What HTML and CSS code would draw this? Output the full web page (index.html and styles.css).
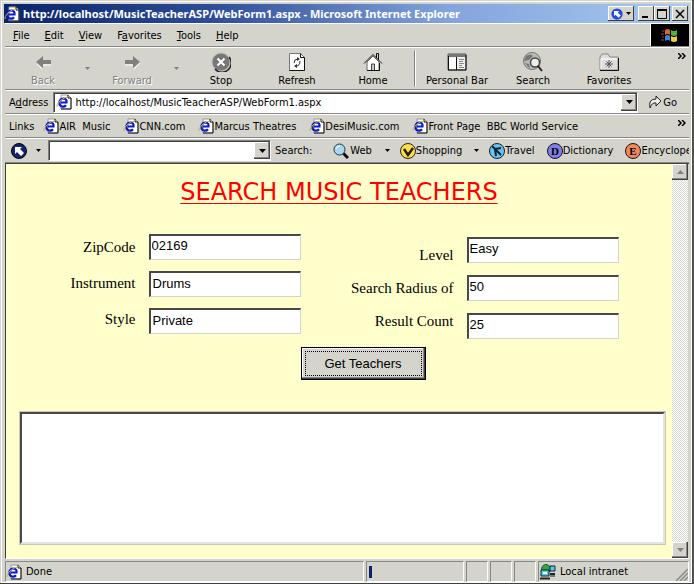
FILE: index.html
```html
<!DOCTYPE html>
<html lang="en">
<head>
    <meta charset="UTF-8">
    <title>WebForm1</title>
    <link rel="stylesheet" href="styles.css">
</head>
<body>
    <!-- shared icons -->
    <svg class="defs" aria-hidden="true">
        <symbol id="ie" viewBox="0 0 16 16">
            <path d="M5 1h7l3 3v11H5z" fill="#fff" stroke="#999"/>
            <path d="M15 4v11H5M12 1v3h3" fill="none" stroke="#111"/>
            <path d="M10 11.200Q8.500 13 6.300 12.600Q3.300 12 3.300 8.500Q4 4.500 7.500 4.500Q11 4.800 10.500 8.500H5" fill="none" stroke="#0a18d0" stroke-width="2.200"/>
            <path d="M1 13Q0 11 4 7T12 3" fill="none" stroke="#c8b820"/>
        </symbol>
        <symbol id="down" viewBox="0 0 7 4">
            <path d="M0 0h7L3.500 4z" fill="currentColor"/>
        </symbol>
        <symbol id="more" viewBox="0 0 8 6">
            <path d="M0 0l3 3-3 3M4 0l3 3-3 3" fill="none" stroke="#000" stroke-width="1.500"/>
        </symbol>
        <symbol id="compass" viewBox="0 0 16 16">
            <circle cx="8" cy="8" r="7.500" fill="#12246e" stroke="#001"/>
            <path d="M4 4h7L9 6l4 4-3 3-4-4-2 2z" fill="#fff"/>
        </symbol>
    </svg>

    <div class="window">
        <header class="titlebar">
            <svg class="icon"><use href="#ie"/></svg>
            <span class="title">http://localhost/MusicTeacherASP/WebForm1.aspx - Microsoft Internet Explorer</span>
            <button class="cap cap_wide" aria-label="Companion">
                <svg width="12" height="12" viewBox="0 0 16 16"><circle cx="8" cy="8" r="7.500" fill="#2448e0"/><path d="M4 4h7L9 6l4 4-3 3-4-4-2 2z" fill="#fff"/></svg>
                <svg width="5" height="3"><use href="#down"/></svg>
            </button>
            <div class="cap_group">
                <button class="cap" aria-label="Minimize"><svg width="10" height="10"><path d="M1 8h6" stroke="#000" stroke-width="2"/></svg></button>
                <button class="cap" aria-label="Maximize"><svg width="10" height="10"><path d="M.5 0v9.500h9V0" fill="none" stroke="#000"/><path d="M0 1h10" stroke="#000" stroke-width="2"/></svg></button>
            </div>
            <button class="cap" aria-label="Close"><svg width="10" height="10"><path d="M1 1l8 8M9 1L1 9" stroke="#000" stroke-width="1.500"/></svg></button>
        </header>

        <nav class="menubar">
            <button><u>F</u>ile</button>
            <button><u>E</u>dit</button>
            <button><u>V</u>iew</button>
            <button>F<u>a</u>vorites</button>
            <button><u>T</u>ools</button>
            <button><u>H</u>elp</button>
            <div class="throbber">
                <svg width="18" height="16" viewBox="0 0 18 16">
                    <path d="M4 3q3-2 5 0v5q-2-2-5 0z" fill="#e06030"/>
                    <path d="M10 3q3 2 6 0v5q-3 2-6 0z" fill="#50b040"/>
                    <path d="M4 9q3-2 5 0v5q-2-2-5 0z" fill="#4080e0"/>
                    <path d="M10 9q3 2 6 0v5q-3 2-6 0z" fill="#e8d040"/>
                    <path d="M1 4h2M0 7h3M1 10h2M0 13h3" stroke="#a04848"/>
                </svg>
            </div>
        </nav>

        <div class="toolbar">
            <button class="tool" disabled>
                <svg width="20" height="20"><path d="M3 10l7-6v4h8v4h-8v4z" fill="#808080"/><path d="M10 13h8M4 12l5 5" stroke="#fff"/></svg>
                <span>Back</span>
            </button>
            <button class="drop" disabled aria-label="Back history"><svg width="5" height="3"><use href="#down"/></svg></button>
            <button class="tool" disabled>
                <svg width="20" height="20"><path d="M18 10l-7-6v4H3v4h8v4z" fill="#808080"/><path d="M3 13h8M12 17l6-6" stroke="#fff"/></svg>
                <span>Forward</span>
            </button>
            <button class="drop" disabled aria-label="Forward history"><svg width="5" height="3"><use href="#down"/></svg></button>
            <button class="tool">
                <svg width="20" height="20"><circle cx="10" cy="10" r="9" fill="#777" stroke="#bbb"/><path d="M4 17a9.200 9.200 0 0 0 14-12" fill="none" stroke="#222" stroke-width="1.500"/><path d="M6.500 6.500l7 7M13.500 6.500l-7 7" stroke="#fff" stroke-width="2"/></svg>
                <span>Stop</span>
            </button>
            <button class="tool">
                <svg width="20" height="20"><path d="M2.500 1.500h11l4 4v13h-15z" fill="#fff" stroke="#777"/><path d="M13.500 1.500v4h4v13h-15" fill="none" stroke="#111"/><path d="M7 11q0-4 4-4M13 9q0 5-4 5" fill="none" stroke="#333"/><path d="M10 5l3 2-3 2zM10 12l-3 2 3 2z" fill="#333"/></svg>
                <span>Refresh</span>
            </button>
            <button class="tool">
                <svg width="20" height="20"><path d="M4 10v8.500h12V10l-6-6z" fill="#fff" stroke="#666"/><path d="M13.500 6V1.500h2V8M1 11.500l9-9 9 9M16.500 11v7.500H4" fill="none" stroke="#111"/><path d="M8.500 18v-6h3v6" fill="#ccc" stroke="#444"/></svg>
                <span>Home</span>
            </button>
            <div class="sep"></div>
            <button class="tool">
                <svg width="20" height="20"><path d="M1 2h18v16H1z" fill="#eee" stroke="#555"/><path d="M1 2h18v3H1z" fill="#777"/><path d="M2 6h7v11H2z" fill="#fff"/><path d="M9.500 5v13M19 3v15H1M1.500 4v14" fill="none" stroke="#111"/><path d="M12 7.500h5M12 9.500h4M12 11.500h5M12 13.500h3M12 15.500h5" stroke="#888"/></svg>
                <span>Personal Bar</span>
            </button>
            <button class="tool">
                <svg width="20" height="20"><circle cx="9" cy="9" r="8.500" fill="#bbb" stroke="#777"/><path d="M3 4q5-3 7 0l-4 4-5 1zM2 11l4 1 1 5z" fill="#777"/><circle cx="12" cy="10.500" r="4.500" fill="#eee" stroke="#444" stroke-width="1.500"/><path d="M15 14l4 5" stroke="#222" stroke-width="2"/></svg>
                <span>Search</span>
            </button>
            <button class="tool">
                <svg width="20" height="20"><path d="M1 18V5l2-3h6l2 3h8v13z" fill="#ddd" stroke="#888"/><path d="M2 17V7h16" fill="none" stroke="#fff"/><path d="M19.500 6v12.500H1" fill="none" stroke="#111"/><path d="M10 8v8M6 12h8M7.500 9.500l5 5M12.500 9.500l-5 5" stroke="#555"/></svg>
                <span>Favorites</span>
            </button>
            <button class="more" aria-label="More buttons"><svg width="8" height="6"><use href="#more"/></svg></button>
        </div>

        <div class="bar address">
            <label for="address">A<u>d</u>dress</label>
            <div class="combo">
                <svg class="icon"><use href="#ie"/></svg>
                <input id="address" value="http://localhost/MusicTeacherASP/WebForm1.aspx">
                <button class="combo_btn" aria-label="Show addresses"><svg width="7" height="4"><use href="#down"/></svg></button>
            </div>
            <button class="go">
                <svg width="14" height="16"><path d="M2 14Q0 5 8 5V2l5 5-5 5V9Q4 8 2 14z" fill="#eee" stroke="#222"/></svg>
                Go
            </button>
        </div>

        <nav class="bar links">
            <span>Links</span>
            <a href="#"><svg class="icon"><use href="#ie"/></svg>AIR&nbsp; Music</a>
            <a href="#"><svg class="icon"><use href="#ie"/></svg>CNN.com</a>
            <a href="#"><svg class="icon"><use href="#ie"/></svg>Marcus Theatres</a>
            <a href="#"><svg class="icon"><use href="#ie"/></svg>DesiMusic.com</a>
            <a href="#"><svg class="icon"><use href="#ie"/></svg>Front Page&nbsp; BBC World Service</a>
            <button class="more" aria-label="More links"><svg width="8" height="6"><use href="#more"/></svg></button>
        </nav>

        <div class="bar companion">
            <button class="logo" aria-label="Companion menu">
                <svg class="icon"><use href="#compass"/></svg>
                <svg width="5" height="3"><use href="#down"/></svg>
            </button>
            <div class="combo">
                <input id="websearch" aria-label="Search the web" value="">
                <button class="combo_btn" aria-label="Show searches"><svg width="7" height="4"><use href="#down"/></svg></button>
            </div>
            <label for="websearch">Search:</label>
            <button class="item item_drop item_web">
                <svg class="icon" viewBox="0 0 16 16"><path d="M10 10l5 5" stroke="#111" stroke-width="3"/><circle cx="6.500" cy="6.500" r="5.500" fill="#a8d8f0" stroke="#234"/><path d="M3 6q1-3 4-3" fill="none" stroke="#fff"/></svg>
                Web
                <svg class="arrow" width="5" height="3"><use href="#down"/></svg>
            </button>
            <button class="item item_drop">
                <svg class="icon" viewBox="0 0 16 16"><circle cx="8" cy="8" r="7.500" fill="#ffe040" stroke="#222"/><path d="M4 6l4 6 5-7" fill="none" stroke="#221" stroke-width="2.500"/></svg>
                Shopping
                <svg class="arrow" width="5" height="3"><use href="#down"/></svg>
            </button>
            <button class="item">
                <svg class="icon" viewBox="0 0 16 16"><circle cx="8" cy="8" r="7.500" fill="#68c4f4" stroke="#122"/><path d="M3 3l9 9M5 6l7-1M6 6l1 7" stroke="#123" stroke-width="2" fill="none"/></svg>
                Travel
            </button>
            <button class="item">
                <svg class="icon" viewBox="0 0 16 16"><circle cx="8" cy="8" r="7.500" fill="#8080e8" stroke="#112"/><text x="8" y="12" class="glyph">D</text></svg>
                Dictionary
            </button>
            <button class="item">
                <svg class="icon" viewBox="0 0 16 16"><circle cx="8" cy="8" r="7.500" fill="#f08860" stroke="#211"/><text x="8" y="12" class="glyph">E</text></svg>
                Encyclopedia
            </button>
        </div>

        <div class="viewport">
            <main class="page">
                <h1>SEARCH MUSIC TEACHERS</h1>
                <form onsubmit="return false">
                    <div class="fields">
                        <div class="labels labels_left">
                            <label for="zip">ZipCode</label>
                            <label for="instrument">Instrument</label>
                            <label for="style">Style</label>
                        </div>
                        <div class="boxes boxes_left">
                            <input id="zip" value="02169">
                            <input id="instrument" class="indent" value="Drums">
                            <input id="style" class="indent" value="Private">
                        </div>
                        <div class="labels labels_right">
                            <label for="level">Level</label>
                            <label for="radius">Search Radius of</label>
                            <label for="count">Result Count</label>
                        </div>
                        <div class="boxes boxes_right">
                            <input id="level" value="Easy">
                            <input id="radius" value="50">
                            <input id="count" value="25">
                        </div>
                    </div>
                    <div class="submit">
                        <button class="get"><span>Get Teachers</span></button>
                    </div>
                    <textarea class="results" aria-label="Results"></textarea>
                </form>
            </main>
            <div class="scrollbar">
                <button aria-label="Scroll up"><svg width="7" height="4"><path d="M0 4h7L3.500 0z" fill="#808080"/></svg></button>
                <button aria-label="Scroll down"><svg width="7" height="4"><use href="#down"/></svg></button>
            </div>
        </div>

        <footer class="status">
            <div class="pane pane_main"><svg class="icon"><use href="#ie"/></svg>Done</div>
            <div class="pane pane_progress"><i></i></div>
            <div class="pane pane_small"></div>
            <div class="pane pane_small"></div>
            <div class="pane pane_small"></div>
            <div class="pane pane_zone">
                <svg class="icon" viewBox="0 0 16 16"><circle cx="6" cy="5" r="4.500" fill="#40a040" stroke="#164"/><path d="M1 6h8v6H1zM10 2h5v5h-5zM10 12h5" fill="#50d0e8" stroke="#123"/><path d="M0 14.500h10M10 10h5" stroke="#222" stroke-width="2"/><path d="M3 8h4v2H3z" fill="#fff"/></svg>
                Local intranet
                <svg class="grip" width="12" height="12"><path d="M0 12L12 0M4 12l8-8M8 12l4-4" stroke="#888" stroke-width="1.500"/></svg>
            </div>
        </footer>
    </div>
</body>
</html>
```
FILE: styles.css
```css
* {
    box-sizing: border-box;
}
body {
    margin: 0;
    font-family: "DejaVu Sans Condensed", "DejaVu Sans", sans-serif;
    font-size: 11px;
    color: #000;
    background-color: #d4d4cc;
}
button, input {
    font: inherit;
    color: inherit;
    margin: 0;
    padding: 0;
    border: 0;
    background: none;
}
svg {
    display: block;
    flex: none;
}
.defs {
    position: absolute;
    width: 0;
    height: 0;
}
.icon {
    width: 16px;
    height: 16px;
}
.glyph {
    font: bold 11px "Liberation Serif", serif;
    text-anchor: middle;
}

/*  WINDOW  */
.window {
    display: flex;
    flex-direction: column;
    min-height: 100vh;
    padding: 4px 3px 1px 5px;
    border-right: 2px solid #505050;
    border-bottom: 2px solid #404040;
    box-shadow: inset 1px 1px #d4d4cc, inset 2px 2px #fff, inset -1px -1px #fff;
}
.titlebar {
    display: flex;
    align-items: center;
    height: 19px;
    padding-right: 1px;
    margin-left: -1px;
    background: linear-gradient(90deg, #0a246a, #2c4c98 30%, #84a4dc 65%, #a6caf0);
}
.title {
    flex: 1;
    min-width: 0;
    overflow: hidden;
    white-space: nowrap;
    margin-left: 3px;
    color: #fff;
    font-family: "Noto Sans", sans-serif;
    font-size: 11px;
    font-weight: bold;
}
.cap {
    display: flex;
    align-items: center;
    justify-content: center;
    width: 16px;
    height: 15px;
    background-color: #d4d4cc;
    box-shadow: inset -1px -1px #404040, inset 1px 1px #fff;
}
.cap_wide {
    width: 26px;
    gap: 3px;
}
.cap_group {
    display: flex;
    margin: 0 2px 0 4px;
}

/*  MENU  */
.menubar {
    display: flex;
    align-items: center;
    height: 24px;
    border-top: 1px solid #fff;
    border-bottom: 1px solid #888;
}
.menubar button {
    padding: 0 7px 0 8px;
}
.throbber {
    display: flex;
    align-items: center;
    justify-content: center;
    align-self: stretch;
    width: 39px;
    margin-left: auto;
    background-color: #000;
    border-left: 1px solid #fff;
}

/*  TOOLBAR  */
.toolbar {
    display: flex;
    height: 43px;
    border-top: 1px solid #fff;
    border-bottom: 1px solid #888;
}
.tool {
    display: flex;
    flex-direction: column;
    align-items: center;
    width: 76px;
    padding-top: 4px;
    gap: 2px;
    white-space: nowrap;
}
.tool:disabled {
    color: #808080;
    text-shadow: 1px 1px #fff;
}
.drop {
    display: flex;
    align-items: center;
    justify-content: center;
    width: 13px;
    color: #808080;
}
.sep {
    width: 2px;
    margin: 3px;
    border-left: 1px solid #808080;
    border-right: 1px solid #fff;
}
.more {
    margin-left: auto;
    align-self: flex-start;
    padding: 5px 3px;
}

/*  ADDRESS, LINKS AND COMPANION BARS  */
.bar {
    display: flex;
    align-items: center;
    height: 24px;
    padding-left: 4px;
    border-top: 1px solid #fff;
    border-bottom: 1px solid #888;
    white-space: nowrap;
    overflow: hidden;
}
.combo {
    display: flex;
    align-items: center;
    height: 21px;
    padding-left: 2px;
    background-color: #fff;
    border: 1px solid #808080;
    border-right-color: #fff;
    border-bottom-color: #fff;
    box-shadow: inset 1px 1px #404040;
}
.combo input {
    flex: 1;
    min-width: 0;
    margin-left: 3px;
    outline: 0;
}
.combo_btn {
    display: flex;
    align-items: center;
    justify-content: center;
    width: 16px;
    height: 17px;
    background-color: #d4d4cc;
    box-shadow: inset -1px -1px #404040, inset -2px -2px #888, inset 1px 1px #fff;
}
.address .combo {
    flex: 1;
    margin-left: 5px;
}
.go {
    display: flex;
    align-items: center;
    gap: 1px;
    padding: 0 12px 0 10px;
}
.links a {
    display: flex;
    align-items: center;
    margin-left: 13px;
    color: #000;
    text-decoration: none;
}
.links span {
    margin-right: -4px;
}
.companion {
    height: 25px;
}
.companion .combo {
    width: 223px;
    margin: 0 4px 0 5px;
    flex: none;
}
.logo {
    display: flex;
    align-items: center;
    gap: 9px;
    padding: 0 2px;
}
.item {
    display: flex;
    align-items: center;
    margin-right: 12px;
}
.item_drop {
    margin-right: 10px;
}
.item_web {
    margin-left: 21px;
    gap: 1px;
}
.arrow {
    margin-left: 12px;
}

/*  PAGE  */
.viewport {
    flex: 1;
    display: flex;
    border-left: 1px solid #404040;
    border-top: 1px solid #404040;
    border-bottom: 1px solid #fff;
}
.page {
    flex: 1;
    background-color: #ffffcc;
    padding-bottom: 14px;
}
h1 {
    margin: 13px 0 27px;
    font: 24px/30px "DejaVu Sans", sans-serif;
    color: #f00;
    text-align: center;
    text-decoration: underline 1px;
    text-underline-offset: 3px;
    text-decoration-skip-ink: none;
}
.fields {
    display: flex;
    justify-content: center;
    padding-left: 11px;
    gap: 13px;
}
.labels {
    display: flex;
    flex-direction: column;
    text-align: right;
    font-family: "Liberation Serif", serif;
    font-size: 15px;
}
.labels_left {
    line-height: 36px;
    margin-top: -5px;
}
.labels_right {
    width: 140px;
    line-height: 33px;
    padding-top: 5px;
}
.boxes {
    display: flex;
    flex-direction: column;
    width: 152px;
    gap: 11px;
}
.boxes_right {
    padding-top: 3px;
    gap: 12px;
}
.boxes input {
    height: 26px;
    padding: 0 1px 4px;
    font-family: "Liberation Sans", sans-serif;
    font-size: 13px;
    background-color: #fff;
    border: 2px solid #484848;
    border-right: 1px solid #d4d4cc;
    border-bottom: 1px solid #d4d4cc;
}
.boxes .indent {
    padding: 0 2px 2px;
}
.submit {
    display: flex;
    justify-content: center;
    margin-top: 8px;
    padding-left: 48px;
}
.get {
    width: 125px;
    height: 33px;
    padding: 3px;
    font-family: "Liberation Sans", sans-serif;
    font-size: 13px;
    background-color: #d4d4cc;
    border: 1px solid #000;
    box-shadow: inset -1px -1px #404040, inset -2px -2px #888, inset 1px 1px #fff;
}
.get span {
    display: block;
    line-height: 23px;
    border: 1px dotted #000;
}
.results {
    display: block;
    width: calc(100% - 21px);
    height: 132px;
    margin: 32px 7px 0 14px;
    background-color: #fff;
    border: 2px solid #484848;
    border-right: 2px solid #e4e4e4;
    border-bottom: 2px solid #e4e4e4;
    outline: 1px solid #c8c8b8;
    resize: none;
}
.scrollbar {
    display: flex;
    flex-direction: column;
    justify-content: space-between;
    width: 16px;
    margin-right: 1px;
    background: repeating-conic-gradient(#fff 0 25%, #d8d8d0 0 50%) 0 0 / 2px 2px;
}
.scrollbar button {
    display: flex;
    align-items: center;
    justify-content: center;
    height: 16px;
    color: #808080;
    background-color: #d4d4cc;
    box-shadow: inset -1px -1px #404040, inset -2px -2px #888, inset 1px 1px #fff;
}

/*  STATUS BAR  */
.status {
    display: flex;
    gap: 2px;
    height: 21px;
    margin-top: 2px;
}
.pane {
    display: flex;
    align-items: center;
    gap: 4px;
    border: 1px solid #888;
    border-right-color: #fff;
    border-bottom-color: #fff;
}
.pane_main {
    flex: 1;
}
.pane_progress {
    width: 98px;
    padding-left: 2px;
}
.pane_progress i {
    width: 3px;
    height: 12px;
    background-color: #0a246a;
}
.pane_small {
    width: 22px;
}
.pane_zone {
    width: 151px;
    padding-left: 1px;
}
.grip {
    margin-left: auto;
    align-self: flex-end;
}
```
